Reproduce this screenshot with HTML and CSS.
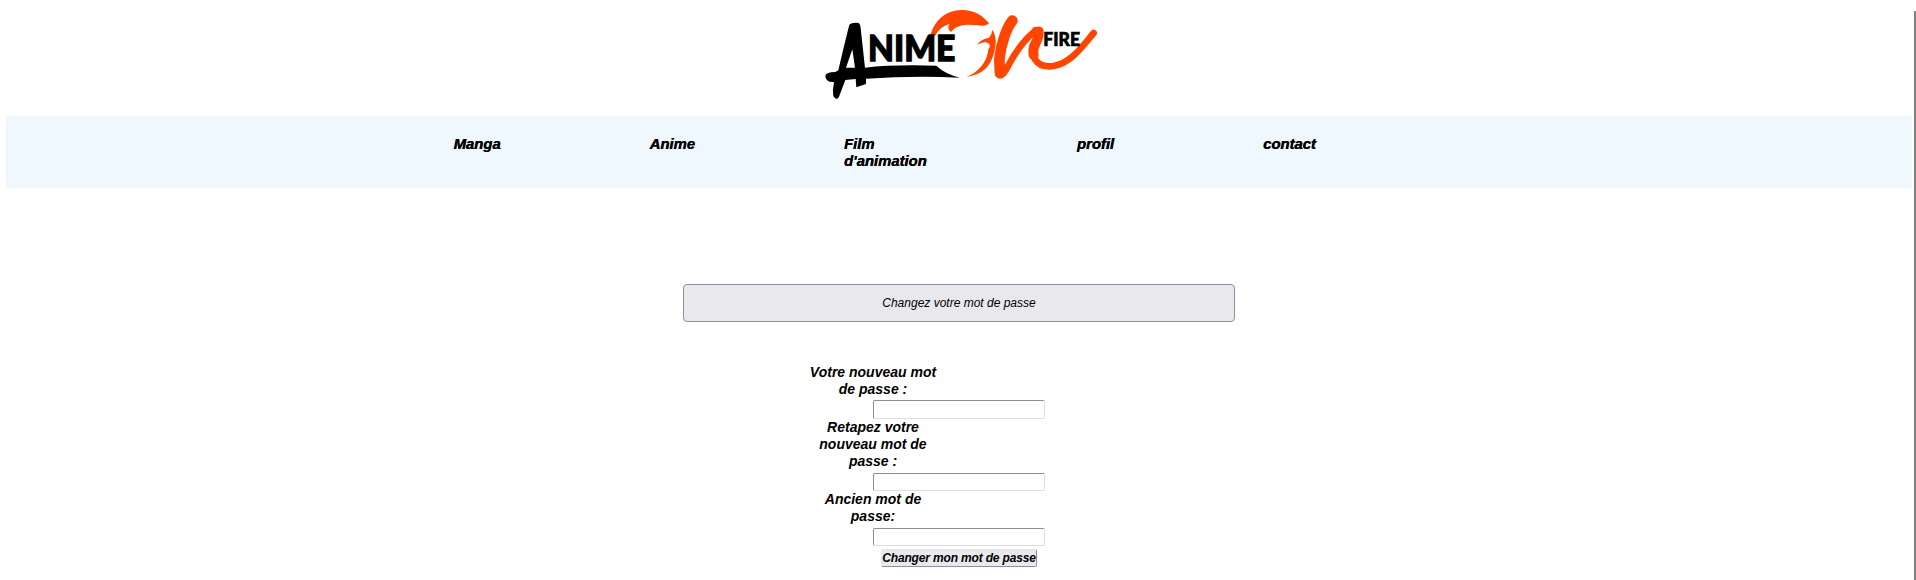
FILE: index.html
```html
<!DOCTYPE html>
<html lang="fr">
<head>
<meta charset="utf-8">
<title>Anime On Fire</title>
<link rel="stylesheet" href="styles.css">
</head>
<body>
<header class="header">
<svg class="logo" viewBox="0 0 900 330" role="img" aria-label="Anime On Fire">
  <path fill="#000" d="M119 73Q126 67 145 69Q151 71 152 85L165 203Q250 193 379 197Q405 222 450 233Q310 227 168 236V252L139 262L137 237L106 240L87 290Q79 304 70 288Q67 270 72 246Q50 248 46 230Q45 216 76 216L85 211Q98 155 116 82ZM127 148L108 203H135Z"/>
  <path fill="#ff4500" d="M361 108C371 63 408 29 457 30C492 30 515 45 537 69Q529 80 503 76C475 72 440 72 423 96Q409 85 419 71Q388 80 376 107Z"/>
  <path fill="#ff4500" d="M502 134Q512 118 537 113Q546 104 547 89Q559 108 557 131L554 150C546 189 526 224 470 230C502 219 532 188 535 148Q547 132 527 126Q513 128 502 134Z"/>
  <path class="brush" d="M607 63C578 100 563 157 566 205C568 236 580 225 593 200C619 151 647 116 672 96C704 73 688 115 679 127C659 165 674 205 730 198C784 190 821 134 851 99"/>
  <path class="brush-wide" d="M607 62C590 83 573 130 568 178L570 220"/>
  <path class="brush-mid" d="M679 95Q692 100 678 127Q667 145 671 165"/>
  <text class="logo-anime" x="174" y="184" textLength="262" lengthAdjust="spacingAndGlyphs">NIME</text>
  <text class="logo-fire" x="700" y="137" textLength="110" lengthAdjust="spacingAndGlyphs">FIRE</text>
</svg>
</header>
<nav class="nav">
  <a>Manga</a><a>Anime</a><a class="film">Film d'animation</a><a>profil</a><a>contact</a>
</nav>
<main class="main">
  <h1 class="title">Changez votre mot de passe</h1>
  <form class="form">
    <label class="label" for="p1">Votre nouveau mot<br>de passe :</label>
    <input class="field" id="p1" type="password">
    <label class="label" for="p2">Retapez votre<br>nouveau mot de<br>passe :</label>
    <input class="field" id="p2" type="password">
    <label class="label" for="p3">Ancien mot de<br>passe:</label>
    <input class="field" id="p3" type="password">
    <button class="submit" type="button">Changer mon mot de passe</button>
  </form>
</main>
<div class="edge"></div>
</body>
</html>
```
FILE: styles.css
```css
* { box-sizing: border-box; }
body {
  margin: 0;
  height: 580px;
  overflow: hidden;
  background: #fff;
  color: #000;
  font-family: "Liberation Sans", Arial, sans-serif;
  font-style: italic;
}
.header { height: 116px; padding-left: 810px; }
.logo { display: block; width: 300px; height: 110px; font-style: normal; }
.brush { fill: none; stroke: #ff4500; stroke-width: 20; stroke-linecap: round; stroke-linejoin: round; }
.brush-wide { fill: none; stroke: #ff4500; stroke-width: 32; stroke-linecap: round; }
.brush-mid { fill: none; stroke: #ff4500; stroke-width: 30; stroke-linecap: round; }
.logo-anime { font: 900 108px Lato, sans-serif; stroke: #000; stroke-width: 4; }
.logo-fire { font: 900 54px Lato, sans-serif; stroke: #000; stroke-width: 2; }
.nav {
  display: flex;
  gap: 149px;
  height: 72px;
  margin: 0 4px 0 6px;
  padding: 20px 0 0 447.5px;
  background: #eff7ff;
  font-weight: 700;
  font-size: 14.85px;
  line-height: 17px;
  text-shadow: 0.4px 0 0 #000;
}
.film { width: 84px; }
.main { display: flex; flex-direction: column; align-items: center; padding: 96px 0 0 2px; }
.title {
  width: 552px;
  height: 38px;
  margin: 0 0 41.6px;
  border: 1px solid #8f8f9d;
  border-radius: 4px;
  background: #e9e9ed;
  font-weight: 400;
  font-size: 12px;
  line-height: 36px;
  text-align: center;
}
.form { display: flex; flex-direction: column; width: 172px; }
.label {
  width: 128px;
  margin-left: -64px;
  font-weight: 700;
  font-size: 14px;
  line-height: 17px;
  text-align: center;
  white-space: nowrap;
}
.field {
  width: 172px;
  height: 18.4px;
  margin: 2.8px 0 0;
  border: 1px solid;
  border-color: #8e8e8e #dedede #dedede #8e8e8e;
  border-radius: 2px;
  background: #fff;
}
.submit {
  align-self: center;
  width: 156px;
  height: 18px;
  margin-top: 2.8px;
  padding: 0;
  border: 1px solid;
  border-color: #e3e3e7 #8f8f9d #8f8f9d #e3e3e7;
  border-radius: 2px;
  background: #e9e9ed;
  color: #000;
  font: italic 700 12px/16px "Liberation Sans", Arial, sans-serif;
  letter-spacing: -0.16px;
  white-space: nowrap;
}
.edge { position: absolute; top: 11px; right: 0; bottom: 0; width: 2px; background: #828282; }
```
